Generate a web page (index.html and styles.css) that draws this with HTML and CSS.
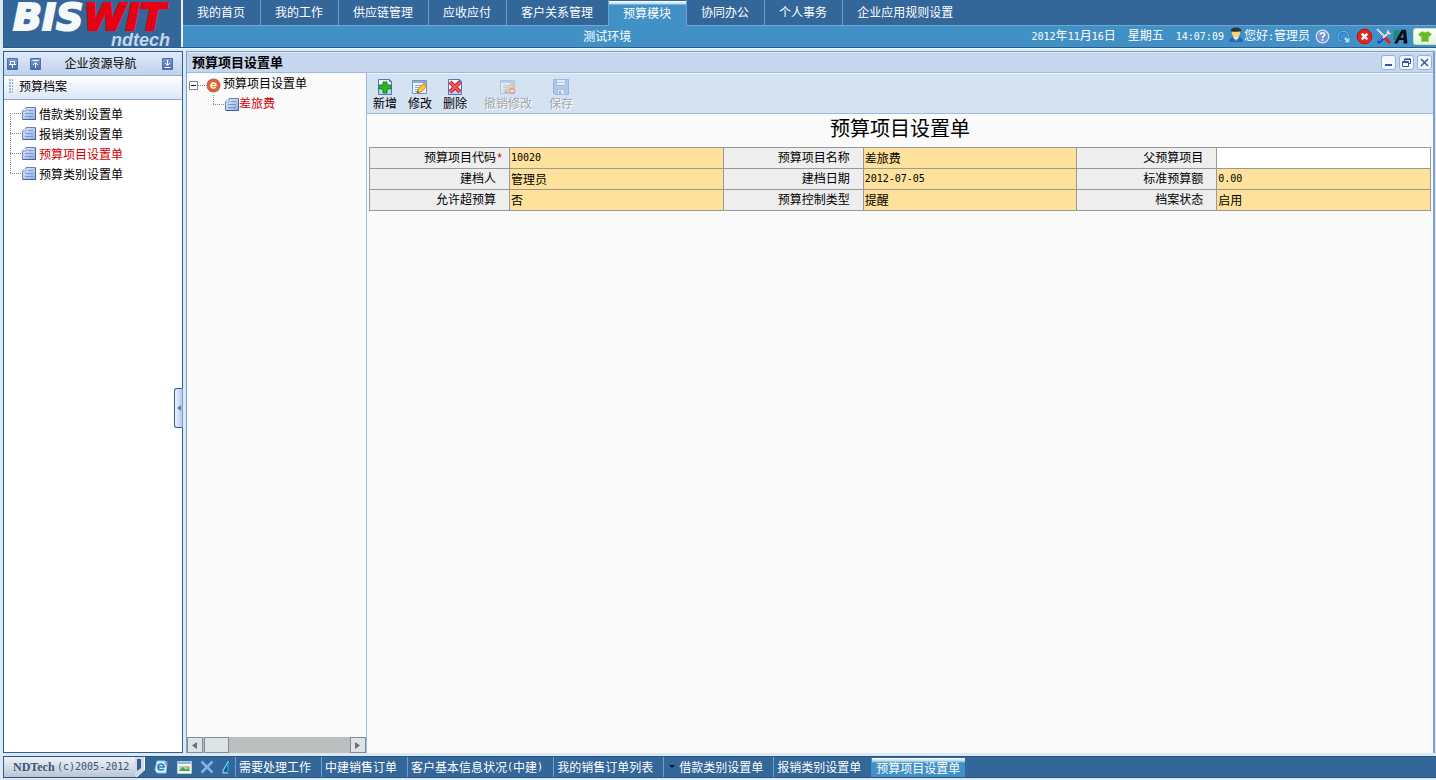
FILE: index.html
```html
<!DOCTYPE html>
<html lang="zh-CN">
<head>
<meta charset="utf-8">
<title>预算项目设置单</title>
<link rel="stylesheet" href="styles.css">
</head>
<body>
<svg class="defs" aria-hidden="true">
  <defs>
    <linearGradient id="doc-fill" x1="0" y1="0" x2="1" y2="1"><stop offset="0" stop-color="#e6effd"/><stop offset="1" stop-color="#8eaae0"/></linearGradient>
    <linearGradient id="blue-fill" x1="0" y1="0" x2="0" y2="1"><stop offset="0" stop-color="#7fa0d8"/><stop offset="1" stop-color="#3f68b4"/></linearGradient>
    <symbol id="doc" viewBox="0 0 14 13"><path d="M4 .5h9.5v12H.5V4z" fill="url(#doc-fill)" stroke="#6482ba"/><path d="M.5 4H4V.5" fill="#fff" stroke="#7f9bcf"/><path d="M6 3.500h5M3 6.500h8M3 9.500h8" stroke="#7a96cc" fill="none"/><path d="M13.500 1v11.500H1" stroke="#46629c" fill="none"/></symbol>
    <symbol id="page" viewBox="0 0 16 16"><path d="M1.500.5h11l2 2v13h-13z" fill="#f4f9ff" stroke="#4f79b4"/><path d="M12.500.5v2h2z" fill="#9dbbe2" stroke="#4f79b4"/><path d="M2 11h12v4H2z" fill="#bcd4f2"/></symbol>
    <symbol id="note" viewBox="0 0 16 16"><path d="M.5 1.500h14v13H.5z" fill="#f4f9ff" stroke="#6f97c8"/><path d="M1 2h13v2H1z" fill="#8bb0de"/><path d="M3 6.500h8M3 8.500h6M3 10.500h4M3 12.500h3" stroke="#8aa6c8"/><path d="M5 14l1-4 6-6 3 3-6 6z" fill="#fbc63c" stroke="#b57a1e" stroke-width=".8"/><path d="M11 5l3 3 1.500-1.500-3-3z" fill="#e98f4b"/><path d="M5 14l.7-2.300 1.600 1.600z" fill="#4d3822"/></symbol>
  </defs>
</svg>

<header class="top">
  <a class="logo" href="#"><span class="logo-main">BIS<span class="logo-red">WIT</span></span><span class="logo-sub">ndtech</span></a>
  <div class="top-main">
    <nav class="tabs">
      <a href="#">我的首页</a><a href="#">我的工作</a><a href="#">供应链管理</a><a href="#">应收应付</a><a href="#">客户关系管理</a><a href="#" class="on">预算模块</a><a href="#">协同办公</a><a href="#">个人事务</a><a href="#" class="last">企业应用规则设置</a>
    </nav>
    <div class="status">
      <div class="env">测试环境</div>
      <div class="clock"><span><i>2012</i>年<i>11</i>月<i>16</i>日</span><span>星期五</span><span><i>14:07:09</i></span></div>
      <svg class="user" width="14" height="16" viewBox="0 0 14 16"><path d="M0 15q0-4 4-5l3 1 3-1q4 1 4 5z" fill="#2e62bd"/><path d="M4 10l3 4 3-4z" fill="#a8cbf4"/><circle cx="7" cy="6" r="4.200" fill="#f8d174"/><path d="M1.500 4Q2 .4 7 .4t5.500 3.600L9 4.800H4z" fill="#2d3035"/><path d="M4 7l3 4 3-4-1 5H5z" fill="#ffe9a4"/></svg>
      <span class="hello">您好<i>:</i>管理员</span>
      <div class="tools">
        <button aria-label="帮助"><svg width="15" height="15" viewBox="0 0 15 15"><circle cx="7.500" cy="7.500" r="6.300" fill="#7595d2" stroke="#d7e2f2" stroke-width="1.300"/><path d="M5.300 5.700Q5.400 3.800 7.500 3.800q2.200 0 2.200 1.800 0 1-1.200 1.700-1 .6-1 1.600" fill="none" stroke="#fff" stroke-width="1.600"/><path d="M6.700 10h1.700v1.700H6.700z" fill="#fff"/></svg></button>
        <button aria-label="刷新"><svg width="15" height="15" viewBox="0 0 15 15"><path d="M5.500 12.500A5.300 5.300 0 1 1 12.700 8" fill="none" stroke="#2b7cc4" stroke-width="3"/><path d="M5.500 12.500A5.300 5.300 0 1 1 12.700 8" fill="none" stroke="#6bb8ee" stroke-width="1.200"/><path d="M7.500 14H14V7.500l-2 2-2.500-2L7.500 10l2 2z" fill="#a5dcfb" stroke="#1f78be" stroke-width=".8"/></svg></button>
        <button aria-label="退出"><svg width="15" height="15" viewBox="0 0 15 15"><path d="M4.500.5h6l4 4v6l-4 4h-6l-4-4v-6z" fill="#e5251d" stroke="#b01713"/><path d="M4.700 4.700l5.600 5.600m0-5.600l-5.600 5.600" stroke="#fff" stroke-width="2.400"/></svg></button>
        <button aria-label="设置"><svg width="16" height="17" viewBox="0 0 16 17"><path d="M1 1l8 8" stroke="#d9dde3" stroke-width="1.800"/><path d="M8 9l6 6" stroke="#d42b2b" stroke-width="3.400"/><path d="M2 15l6-6" stroke="#1d4fb6" stroke-width="3.400"/><path d="M3 13l5-5" stroke="#7aaaf4"/><path d="M7 10l5-5" stroke="#dfe4ea" stroke-width="2"/><path d="M13 1l-2 1.500-.5 3L13 7l3-2-2.500-.5-.8-1.500z" fill="#eef2f6" stroke="#70808f" stroke-width=".6"/></svg></button>
        <button aria-label="字体"><svg width="16" height="15" viewBox="0 0 16 15"><path d="M1 1h6L3 11H0z" fill="#188b7d"/><path d="M1 14.500L8.500.8H13l1.400 13.700h-3.700L10.600 11H6.200l-1.800 3.500zM7.500 8.700h3L10.300 4z" fill="#080c10"/></svg></button>
        <button aria-label="换肤" class="skin"><svg width="14" height="11" viewBox="0 0 14 11"><path d="M4 .5q3 2 6 0L13.500 3l-1.800 2.500-1.200-.6v5.600h-7V4.900l-1.200.6L.5 3z" fill="#68b72c" stroke="#86cb4e" stroke-width=".6"/></svg></button>
      </div>
    </div>
  </div>
</header>

<div class="work">
  <aside class="side">
    <div class="side-head">
      <button aria-label="固定"><svg width="11" height="12" viewBox="0 0 11 12"><path d="M.5.5h10v11H.5z" fill="url(#blue-fill)" stroke="#4d6fae"/><path d="M3.500 3v4M7.500 3v4M3 3.500h5M2 6.500h7M5.500 7v3" stroke="#fff"/></svg></button>
      <button aria-label="上移"><svg width="11" height="12" viewBox="0 0 11 12"><path d="M.5.5h10v11H.5z" fill="url(#blue-fill)" stroke="#4d6fae"/><path d="M2.500 2.500h6M5.500 10V5M3 7l2.500-2.500L8 7" stroke="#fff" fill="none"/></svg></button>
      <h2>企业资源导航</h2>
      <button aria-label="下移"><svg width="11" height="12" viewBox="0 0 11 12"><path d="M.5.5h10v11H.5z" fill="url(#blue-fill)" stroke="#4d6fae"/><path d="M2.500 9.500h6M5.500 2v5M3 5l2.500 2.500L8 5" stroke="#fff" fill="none"/></svg></button>
    </div>
    <div class="side-group">预算档案</div>
    <ul class="menu">
      <li><svg width="14" height="13"><use href="#doc"/></svg><a href="#">借款类别设置单</a></li>
      <li><svg width="14" height="13"><use href="#doc"/></svg><a href="#">报销类别设置单</a></li>
      <li class="cur"><svg width="14" height="13"><use href="#doc"/></svg><a href="#">预算项目设置单</a></li>
      <li><svg width="14" height="13"><use href="#doc"/></svg><a href="#">预算类别设置单</a></li>
    </ul>
    <button class="collapse" aria-label="收起"><svg width="4" height="6" viewBox="0 0 4 6"><path d="M4 0v6L0 3z" fill="#5f7cab"/></svg></button>
  </aside>

  <main class="window">
    <div class="win-head">
      <h1>预算项目设置单</h1>
      <button aria-label="最小化"><svg width="9" height="9" viewBox="0 0 9 9"><path d="M1 6h7v2H1z" fill="#3356a4"/></svg></button>
      <button aria-label="还原"><svg width="9" height="9" viewBox="0 0 9 9"><path d="M2.500 3V.8h6v4.700H7M.5 3.500h6v5h-6zM3 1.500h5M1 4.500h5" fill="none" stroke="#3356a4"/></svg></button>
      <button aria-label="关闭"><svg width="9" height="9" viewBox="0 0 9 9"><path d="M1 1l7 7m0-7L1 8" stroke="#3356a4" stroke-width="1.500"/></svg></button>
    </div>
    <div class="win-body">
      <div class="tree">
        <div class="tree-body">
          <div class="root">
            <svg width="9" height="9" viewBox="0 0 9 9"><path d="M.5.500h8v8h-8z" fill="#fff" stroke="#848484"/><path d="M2 4.500h5" stroke="#111"/></svg>
            <span class="dash"></span>
            <svg width="15" height="15" viewBox="0 0 15 15"><circle cx="7.500" cy="7.500" r="7" fill="#b9684a"/><circle cx="7.500" cy="7.500" r="5.600" fill="#e8622c"/><path d="M5 7.700h5Q9.900 5 7.500 5T5 7.600t2.500 2.500q1.400 0 2.200-.9" fill="none" stroke="#fff" stroke-width="1.300"/></svg>
            <a href="#">预算项目设置单</a>
          </div>
          <div class="leaf"><svg width="14" height="13"><use href="#doc"/></svg><a href="#">差旅费</a></div>
        </div>
        <div class="hscroll">
          <button aria-label="向左"><svg width="5" height="7" viewBox="0 0 5 7"><path d="M5 0v7L0 3.500z" fill="#66717f"/></svg></button>
          <span class="thumb"></span><span class="track"></span>
          <button aria-label="向右"><svg width="5" height="7" viewBox="0 0 5 7"><path d="M0 0v7l5-3.500z" fill="#66717f"/></svg></button>
        </div>
      </div>
      <section class="detail">
        <div class="toolbar">
          <button><svg width="16" height="16" viewBox="0 0 16 16"><use href="#page"/><path d="M6 3h4v3h4v4h-4v4H6v-4H2V6h4z" fill="#2fb52b" stroke="#148216"/></svg>新增</button>
          <button><svg width="16" height="16"><use href="#note"/></svg>修改</button>
          <button><svg width="16" height="16" viewBox="0 0 16 16"><use href="#page"/><path d="M3 3l10 10M13 3L3 13" stroke="#c41f2b" stroke-width="4"/><path d="M3 3l10 10M13 3L3 13" stroke="#f25a5a" stroke-width="2"/></svg>删除</button>
          <button class="wide" disabled><svg width="16" height="16" viewBox="0 0 16 16"><use href="#note"/><circle cx="12" cy="12" r="3.500" fill="#e0564c"/><path d="M10 12h4" stroke="#fff" stroke-width="1.500"/></svg>撤销修改</button>
          <button class="wide" disabled><svg width="16" height="16" viewBox="0 0 16 16"><path d="M.5.5h15v15H2l-1.500-1.500z" fill="#7ca4dc" stroke="#3f6fb4"/><path d="M3.500.5h9v6h-9z" fill="#eef5ff" stroke="#5a86c4"/><path d="M4 3.500h8" stroke="#89a9d2"/><path d="M4.500 10.500h7v5h-7z" fill="#eef5ff" stroke="#5a86c4"/><path d="M6 12h2v3H6z" fill="#3f6fb4"/></svg>保存</button>
        </div>
        <h2 class="form-title">预算项目设置单</h2>
        <form class="form">
          <table>
            <colgroup><col class="k"><col><col class="k"><col><col class="k"><col></colgroup>
            <tr><th class="req"><label for="f1">预算项目代码</label><b>*</b></th><td><input id="f1" class="num" value="10020"></td><th><label for="f2">预算项目名称</label></th><td><input id="f2" value="差旅费"></td><th><label for="f3">父预算项目</label></th><td class="blank"><input id="f3" value=""></td></tr>
            <tr><th><label for="f4">建档人</label></th><td><input id="f4" value="管理员"></td><th><label for="f5">建档日期</label></th><td><input id="f5" class="num" value="2012-07-05"></td><th><label for="f6">标准预算额</label></th><td><input id="f6" class="num" value="0.00"></td></tr>
            <tr><th><label for="f7">允许超预算</label></th><td><input id="f7" value="否"></td><th><label for="f8">预算控制类型</label></th><td><input id="f8" value="提醒"></td><th><label for="f9">档案状态</label></th><td><input id="f9" value="启用"></td></tr>
          </table>
        </form>
      </section>
    </div>
  </main>
</div>

<footer class="taskbar">
  <div class="copy"><b>NDTech</b><span>(c)2005-2012</span></div>
  <svg class="notch" width="17" height="20" viewBox="0 0 17 20"><path d="M0 0h9v13L0 20z" fill="#d3d9e2"/><path d="M0 20L9 13V0h1v13L2 20z" fill="#fff"/><path d="M2 2h4v9l-4 3z" fill="#2f6091"/></svg>
  <div class="quick">
    <button aria-label="网页"><svg width="15" height="14" viewBox="0 0 15 14"><path d="M3 1h8l2 2-1 10H3L1 10z" fill="#dff1fb" stroke="#8dc0df"/><path d="M4 7h6q0-3-3-3T4 7t3 3q2 0 3-1" fill="none" stroke="#207fc0" stroke-width="1.700"/><path d="M10 3l4-2-2 4z" fill="#4cb7e8"/><path d="M12 5l3 0" stroke="#e4572e"/></svg></button>
    <button aria-label="桌面"><svg width="15" height="13" viewBox="0 0 15 13"><path d="M.5.5h14v12H.5z" fill="#f5f7f4" stroke="#b9cadb"/><path d="M1 1h13v2H1z" fill="#8cb9de"/><path d="M2 5h11v5H2z" fill="#a9d7a4"/><path d="M2 10l4-4 3 3 2-2 2 3z" fill="#4da149"/><path d="M9 5h3v2H9z" fill="#e5ae58"/></svg></button>
    <button aria-label="关闭全部"><svg width="14" height="14" viewBox="0 0 14 14"><path d="M1.500 1.500l11 11m0-11l-11 11" stroke="#83b0f4" stroke-width="2.600"/></svg></button>
    <button aria-label="展开"><svg width="8" height="14" viewBox="0 0 8 14"><path d="M7 0v11H1z" fill="#1694d8"/><path d="M6.500 1L1 10.500V13h5" fill="none" stroke="#a9dcf5"/><path d="M5 5v6H2z" fill="#12558c"/></svg></button>
  </div>
  <nav class="tasks">
    <button>需要处理工作</button><button>中建销售订单</button><button>客户基本信息状况<i>(</i>中建<i>)</i></button><button>我的销售订单列表</button><button><svg width="12" height="4" viewBox="0 0 12 4"><path d="M2 0h6L5 3z" fill="#0b1320"/></svg>借款类别设置单</button><button>报销类别设置单</button><button class="on">预算项目设置单</button>
  </nav>
</footer>
</body>
</html>
```

FILE: styles.css
```css
* { box-sizing: border-box; }
html { height: 100%; }
body {
  margin: 0;
  min-height: 100%;
  padding: 0 0 2px 3px;
  display: flex;
  flex-direction: column;
  background: #dbe8f6;
  color: #000;
  font: 12px/16px "Noto Sans CJK SC", sans-serif;
}
.defs { position: absolute; width: 0; height: 0; }
svg { display: block; flex: none; }
a { color: inherit; text-decoration: none; }
button { border: 0; margin: 0; padding: 0; background: none; color: inherit; font: inherit; flex: none; }
h1, h2 { margin: 0; font: inherit; }
i { font: 10px/16px "DejaVu Sans Mono", monospace; }

/* header */
.top { display: flex; height: 48px; background: #336699; border-bottom: 1px solid #2c5a89; }
.logo {
  width: 178px;
  flex: none;
  display: flex;
  flex-direction: column;
  padding: 0 11px 0 9px;
  border-left: 1px solid #2c5a89;
  background: #336699;
  color: #f5f8fb;
}
.logo-main { font: italic bold 38px/34px "DejaVu Sans", sans-serif; -webkit-text-stroke: 2px currentColor; white-space: nowrap; }
.logo-red { color: #e60012; }
.logo-sub { font: italic bold 18px/12px "Liberation Sans", sans-serif; align-self: flex-end; color: #c3d7ea; }
.top-main { flex: 1; border-left: 2px solid #e6eef6; display: flex; flex-direction: column; }
.tabs { display: flex; height: 26px; border-bottom: 1px solid #6fa6d6; color: #fff; }
.tabs a { padding: 4px 15px 0 14px; height: 25px; border-right: 1px solid #6f9fcd; line-height: 16px; white-space: nowrap; }
.tabs .last { border-right: 0; }
.tabs .on { height: 26px; background: linear-gradient(#336699 1px, #fff 1px, #b9d8ee 4px, #4291c6 5px); padding-top: 5px; }
.status { flex: 1; display: flex; align-items: center; padding-bottom: 1px; background: #4291c6; color: #fff; white-space: nowrap; }
.env { flex: 1; text-align: center; }
.clock { display: flex; gap: 12px; }
.user { margin: 0 1px 2px 5px; }
.tools { display: flex; align-items: center; gap: 6px; padding-left: 4px; margin-left: 1px; }
.tools button:nth-child(n+4) { margin-left: -2px; }
.tools button:nth-child(5) { margin-left: -5px; }
.tools .skin { width: 23px; height: 17px; margin-left: -2px; padding: 2px 4px; border: 1px solid #c2e6b0; border-right: 0; border-radius: 3px 0 0 3px; background: linear-gradient(#fff, #e4f4dc); }

/* work area */
.work { flex: 1; display: flex; gap: 3px; padding: 2px 1px 3px 0; border-top: 1px solid #f3f8fd; }
.side { position: relative; width: 180px; flex: none; border: 1px solid #315f8f; background: #fff; }
.side-head { display: flex; align-items: center; gap: 12px; height: 24px; padding: 0 9px 0 3px; background: linear-gradient(#dfeafa, #c0d1ea); border-bottom: 1px solid #8fb1dc; }
.side-head h2 { flex: 1; padding: 0 2px 1px 0; text-align: center; }
.side-group { display: flex; align-items: center; height: 24px; padding: 0 0 3px 5px; background: linear-gradient(#fff, #dbe6f7); border-bottom: 1px solid #8ba6c8; }
.side-group::before { content: ""; width: 4px; height: 15px; margin-right: 6px; background: radial-gradient(circle at 1px 1px, #9db5da 1px, transparent 1px) 0 0 / 3px 3px; }
.menu { list-style: none; margin: 0; padding: 4px 0 0 6px; }
.menu li { display: flex; align-items: center; height: 20px; }
.menu li svg { margin: 0 3px 1px 0; }
.menu li::before {
  content: "";
  width: 12px;
  height: 20px;
  background:
    repeating-linear-gradient(90deg, #888 0 1px, transparent 1px 2px) 0 9px / 12px 1px no-repeat,
    repeating-linear-gradient(#888 0 1px, transparent 1px 2px) 0 0 / 1px 20px no-repeat;
}
.menu li:first-child::before { background-position: 0 9px, 0 9px; }
.menu li:last-child::before { background-size: 12px 1px, 1px 10px; }
.cur, .leaf a { color: #d00000; }
.collapse { position: absolute; right: -1px; top: 48%; width: 9px; height: 40px; padding-left: 2px; border: 1px solid #315f8f; border-right-color: #7aa4d0; border-radius: 3px 0 0 3px; background: linear-gradient(90deg, #f0f6ff, #b5c9ef); }

.window { flex: 1; display: flex; flex-direction: column; border: 1px solid #7e9fc8; border-bottom: 0; border-right-width: 2px; background: #fafafa; min-width: 0; }
.win-head { display: flex; align-items: center; gap: 3px; height: 21px; padding: 0 1px 0 5px; background: #c6d7ed; border-bottom: 1px solid #9bbbe0; border-top: 1px solid #dce8f6; }
.win-head h1 { flex: 1; padding-bottom: 1px; font-weight: bold; font-size: 13px; }
.win-head button { width: 15px; height: 15px; padding: 2px; border: 1px solid #8eb2de; border-radius: 3px; background: #f5f9ff; }
.win-body { flex: 1; display: flex; }
.tree { width: 180px; flex: none; display: flex; flex-direction: column; border-right: 1px solid #9bbbe0; }
.tree-body { flex: 1; padding: 1px 0 0 2px; }
.root { display: flex; align-items: center; height: 18px; }
.root svg { margin-top: 5px; }
.root a { margin-left: 2px; }
.dash { width: 8px; height: 1px; margin-top: 4px; background: repeating-linear-gradient(90deg, #888 0 1px, transparent 1px 2px); }
.leaf { display: flex; align-items: center; height: 22px; padding-left: 24px; }
.leaf::before {
  content: "";
  width: 12px;
  height: 22px;
  background:
    repeating-linear-gradient(90deg, #888 0 1px, transparent 1px 2px) 0 12px / 12px 1px no-repeat,
    repeating-linear-gradient(#888 0 1px, transparent 1px 2px) 0 3px / 1px 10px no-repeat;
}
.leaf svg { margin-top: 3px; }
.hscroll { display: flex; height: 16px; background: #bbbfc0; }
.hscroll button, .thumb { width: 16px; height: 16px; border: 1px solid #7f8c99; background: #dde2e5; }
.hscroll button { padding-left: 4px; }
.thumb { width: 25px; margin-left: 1px; }
.track { flex: 1; }

.detail { flex: 1; min-width: 0; }
.toolbar { display: flex; gap: 11px; height: 41px; padding: 5px 6px 0; background: #d5e2f2; border-top: 1px solid #eef5fc; border-bottom: 1px solid #9bbbe0; }
.toolbar button { display: flex; flex-direction: column; align-items: center; line-height: 16px; height: 32px; }
.toolbar .wide { margin-left: 6px; }
.toolbar button:disabled { color: #a4a7ab; text-shadow: 1px 1px 0 #fff; }
.toolbar button:disabled svg { opacity: .4; }
.form-title { font-size: 20px; line-height: 28px; padding: 0 0 5px; text-align: center; }
.form { padding: 0 2px; }
table { width: 100%; table-layout: fixed; border-collapse: collapse; }
.k { width: 140px; }
th, td { height: 21px; padding: 0; border: 1px solid #999; }
th { background: #eee; font-weight: normal; text-align: right; padding: 0 13px 2px 0; }
.req { padding-right: 6px; }
th b { display: inline-block; width: 7px; color: #d00000; font: 12px/16px "Liberation Sans", sans-serif; text-align: center; }
td { background: #fee19a; }
.blank { background: #fff; }
input { display: block; width: 100%; height: 20px; padding: 0 0 2px 1px; border: 0; background: none; color: #000; font: inherit; }
.num { font: 10px/16px "DejaVu Sans Mono", monospace; }

/* taskbar */
.taskbar { display: flex; align-items: center; height: 22px; background: #336699; border-top: 1px solid #285682; border-bottom: 1px solid #285682; color: #fff; white-space: nowrap; }
.copy { display: flex; align-items: center; width: 132px; height: 20px; padding-left: 9px; background: linear-gradient(#eff2f6, #bdc5d3); border-left: 1px solid #315f8f; color: #33587f; }
.copy b { font: bold 12px/16px "Liberation Serif", serif; width: 44px; }
.copy span { font: 10px/16px "DejaVu Sans Mono", monospace; }
.quick { display: flex; align-items: center; gap: 8px; width: 83px; padding-left: 2px; }
.tasks { display: flex; align-items: center; }
.tasks button { display: flex; align-items: center; height: 20px; padding: 0 10px 0 3px; border-left: 1px solid #6f9fcd; }
.tasks .on { padding: 2px 5px 0 4px; height: 19px; background: linear-gradient(#fff, #b9d8ee 3px, #4291c6 5px); border-left-color: #4291c6; }
```
